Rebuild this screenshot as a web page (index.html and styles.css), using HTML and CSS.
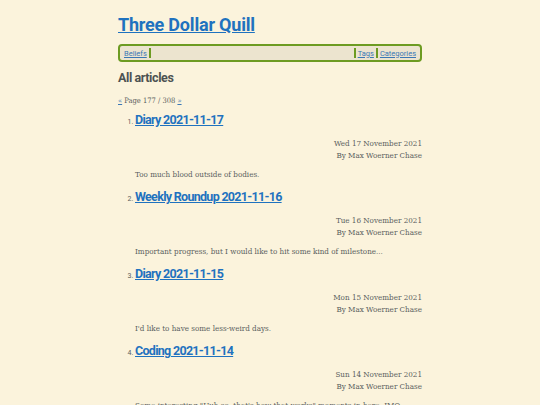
FILE: index.html
```html
<!DOCTYPE html>
<html lang="en">
<head>
<meta charset="utf-8">
<title>Three Dollar Quill</title>
<link rel="stylesheet" href="styles.css">
</head>
<body>
<div class="page">
  <header class="site-header">
    <h1 class="site-title"><a href="#">Three Dollar Quill</a></h1>
    <nav class="nav">
      <a href="#" class="nav-link">Beliefs</a>
      <span class="sep"></span>
      <span class="nav-fill"></span>
      <span class="sep"></span>
      <a href="#" class="nav-link">Tags</a>
      <span class="sep"></span>
      <a href="#" class="nav-link">Categories</a>
    </nav>
  </header>
  <main>
    <h2 class="section-title">All articles</h2>
    <p class="pager"><a href="#">«</a> Page 177 / 308 <a href="#">»</a></p>
    <ol class="articles" start="1">
      <li class="article">
        <h3 class="article-title"><a href="#">Diary 2021-11-17</a></h3>
        <div class="meta">
          <div>Wed 17 November 2021</div>
          <div>By Max Woerner Chase</div>
        </div>
        <p class="summary">Too much blood outside of bodies.</p>
      </li>
      <li class="article">
        <h3 class="article-title"><a href="#">Weekly Roundup 2021-11-16</a></h3>
        <div class="meta">
          <div>Tue 16 November 2021</div>
          <div>By Max Woerner Chase</div>
        </div>
        <p class="summary">Important progress, but I would like to hit some kind of milestone...</p>
      </li>
      <li class="article">
        <h3 class="article-title"><a href="#">Diary 2021-11-15</a></h3>
        <div class="meta">
          <div>Mon 15 November 2021</div>
          <div>By Max Woerner Chase</div>
        </div>
        <p class="summary">I'd like to have some less-weird days.</p>
      </li>
      <li class="article">
        <h3 class="article-title"><a href="#">Coding 2021-11-14</a></h3>
        <div class="meta">
          <div>Sun 14 November 2021</div>
          <div>By Max Woerner Chase</div>
        </div>
        <p class="summary">Some interesting "Uuh so, that's how that works" moments in here, IMO.</p>
      </li>
    </ol>
  </main>
</div>
</body>
</html>
```

FILE: styles.css
```css
html, body {
  margin: 0;
  padding: 0;
  background: #fbf3dc;
}
body {
  font-family: "DejaVu Serif", serif;
  font-stretch: condensed;
  font-size: 8px;
  color: #5a5e5e;
}
.page {
  width: 304px;
  margin: 0 auto;
  padding-top: 14px;
}
.site-title {
  margin: 0;
  font-family: Roboto, sans-serif;
  font-stretch: normal;
  font-size: 18px;
  font-weight: 700;
  line-height: 22px;
  letter-spacing: -0.2px;
}
.site-title a, .article-title a {
  color: #1f72bf;
}
.nav {
  margin-top: 8px;
  display: flex;
  align-items: center;
  height: 12px;
  padding: 1px 2px;
  border: 2px solid #6d9b22;
  border-radius: 4px;
  background: #ece4cf;
  font-family: Roboto, sans-serif;
  font-stretch: normal;
  font-size: 7.5px;
}
.nav-link {
  color: #3b78b5;
  padding: 0 2px;
}
.sep {
  width: 2px;
  height: 10px;
  background: #6d9b22;
}
.nav-fill {
  flex: 1;
}
.section-title {
  margin: 7px 0 0;
  font-family: Roboto, sans-serif;
  font-stretch: normal;
  font-size: 12.5px;
  font-weight: 700;
  line-height: 18px;
  letter-spacing: -0.4px;
  color: #4c5252;
}
.pager {
  margin: 8px 0 0;
  font-size: 7.5px;
  line-height: 12px;
}
.pager a {
  color: #3b78b5;
}
.articles {
  margin: 4px 0 0;
  padding-left: 17px;
}
.article {
  font-family: Roboto, sans-serif;
  font-stretch: normal;
  font-size: 7px;
}
.article-title {
  margin: 0;
  font-size: 12.5px;
  font-weight: 700;
  line-height: 18px;
  letter-spacing: -0.7px;
}
.meta {
  margin-top: 9px;
  text-align: right;
  font-family: "DejaVu Serif", serif;
  font-stretch: condensed;
  font-size: 8px;
  line-height: 12px;
}
.summary {
  margin: 7px 0 7px;
  font-family: "DejaVu Serif", serif;
  font-stretch: condensed;
  font-size: 8px;
  line-height: 12px;
}
```
